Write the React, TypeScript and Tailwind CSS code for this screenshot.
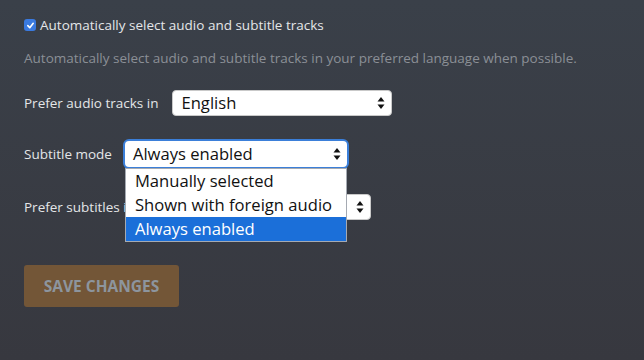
import * as React from "react";

function Arrows() {
  return (
    <svg width="8" height="14" viewBox="0 0 8 14" className="shrink-0">
      <path d="M4 1 L7.5 5.5 L0.5 5.5 Z" fill="#111" />
      <path d="M4 13 L7.5 8.5 L0.5 8.5 Z" fill="#111" />
    </svg>
  );
}

function FakeSelect({
  value,
  width,
  focused,
  children,
}: {
  value: string;
  width: string;
  focused?: boolean;
  children?: React.ReactNode;
}) {
  return (
    <div className={`relative ${width}`}>
      <div
        className={`flex h-[26px] items-center justify-between rounded-[4px] bg-white pl-[8px] pr-[6px] text-[16.6px] leading-none text-[#111] ${
          focused ? "ring-2 ring-[#3b7fd9]" : "border border-[#c9c9c9]"
        }`}
      >
        <span>{value}</span>
        <Arrows />
      </div>
      {children}
    </div>
  );
}

export default function App() {
  const options = ["Manually selected", "Shown with foreign audio", "Always enabled"];
  const selected = "Always enabled";

  return (
    <div
      className="min-h-[360px] bg-gradient-to-b from-[#3a4049] to-[#37383f] px-6 pt-[17px] text-[13.5px] text-[#e4e6e8]"
      style={{ fontFamily: '"Open Sans", "Noto Sans", sans-serif' }}
    >
      <label className="flex h-[16px] items-center gap-[4px]">
        <span className="flex h-[12px] w-[12px] items-center justify-center rounded-[3px] bg-[#3a7ae0]">
          <svg width="9" height="9" viewBox="0 0 10 10">
            <path d="M2 5.2 L4.2 7.4 L8 2.6" stroke="white" strokeWidth="1.8" fill="none" strokeLinecap="round" strokeLinejoin="round" />
          </svg>
        </span>
        <span>Automatically select audio and subtitle tracks</span>
      </label>

      <p className="mt-[15px] text-[#8b8f96]">
        Automatically select audio and subtitle tracks in your preferred language when possible.
      </p>

      <div className="mt-[22px] flex items-center gap-[14px]">
        <span className="font-medium">Prefer audio tracks in</span>
        <FakeSelect value="English" width="w-[220px]" />
      </div>

      <div className="relative z-10 mt-[25px] flex items-center gap-[13px]">
        <span className="font-medium">Subtitle mode</span>
        <FakeSelect value={selected} width="w-[222px]" focused>
          <ul className="absolute left-0 top-[27px] w-full border border-[#a5aab2] bg-white text-[16.6px] text-[#111]">
            {options.map((o) => (
              <li
                key={o}
                className={`flex h-[24px] items-center px-[9px] ${
                  o === selected ? "bg-[#1b6fd9] text-white" : ""
                }`}
              >
                {o}
              </li>
            ))}
          </ul>
        </FakeSelect>
      </div>

      <div className="mt-[27px] flex items-center gap-[14px]">
        <span className="font-medium">Prefer subtitles in</span>
        <FakeSelect value="English" width="w-[222px]" />
      </div>

      <button
        disabled
        className="mt-[45px] h-[42px] w-[155px] rounded-[3px] bg-[#735637] text-[15.5px] font-bold text-[#8d959e]"
      >
        SAVE CHANGES
      </button>
    </div>
  );
}
